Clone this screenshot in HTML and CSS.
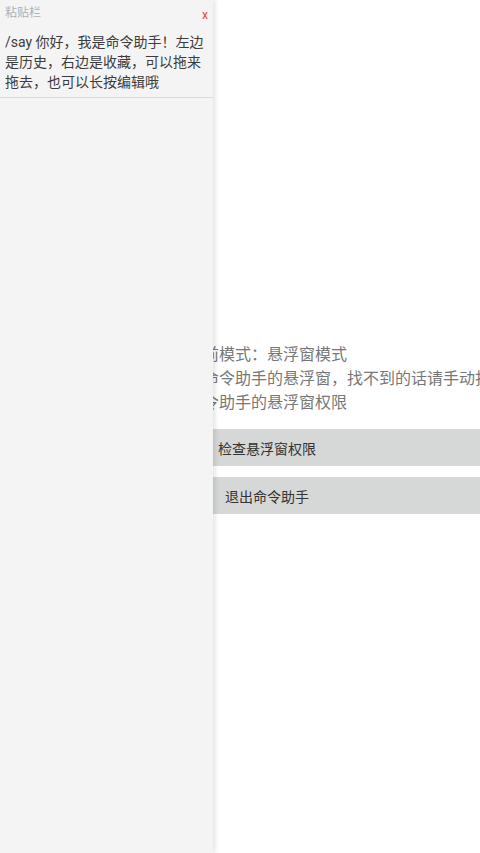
FILE: index.html
```html
<!DOCTYPE html>
<html lang="zh-CN">
<head>
    <meta charset="UTF-8">
    <meta name="viewport" content="width=device-width, initial-scale=1.0">
    <title>命令助手</title>
    <link rel="stylesheet" href="styles.css">
</head>
<body>

    <!-- 主界面 -->
    <div class="main">
        <div class="info">
            <p>当前模式：悬浮窗模式</p>
            <p>请在屏幕边缘或通知栏找到命令助手的悬浮窗，找不到的话请手动打开。</p>
            <p>命令助手的悬浮窗权限</p>
        </div>
        <button class="btn">检查悬浮窗权限</button>
        <button class="btn">退出命令助手</button>
    </div>

    <!-- 粘贴栏 (覆盖在主界面上) -->
    <div class="paste-bar">
        <div class="paste-header">
            <span class="paste-title">粘贴栏</span>
            <span class="paste-close">x</span>
        </div>
        <div class="paste-item">/say 你好，我是命令助手！左边是历史，右边是收藏，可以拖来拖去，也可以长按编辑哦</div>
    </div>

</body>
</html>
```

FILE: styles.css
```css
body {
    margin: 0;
    padding: 0;
    background-color: #fff;
    font-family: Roboto, "Noto Sans CJK SC", sans-serif;
    overflow: hidden;
}

.main {
    height: 853px;
    padding-left: 54px;
    display: flex;
    flex-direction: column;
    align-items: center;
    justify-content: center;
    box-sizing: border-box;
}

.info {
    display: flex;
    flex-direction: column;
    align-items: center;
    margin-bottom: 14px;
    margin-top: 4px;
}

.info p {
    margin: 0;
    font-size: 16px;
    line-height: 24px;
    color: #777;
    white-space: nowrap;
}

.btn {
    width: 100%;
    height: 37px;
    margin-bottom: 11px;
    border: none;
    background-color: #d6d7d7;
    color: #333;
    font-family: inherit;
    font-size: 14px;
    padding: 0;
}

.btn:last-child {
    margin-bottom: 0;
}

/* Paste bar */
.paste-bar {
    position: absolute;
    top: 0;
    left: 0;
    width: 213px;
    height: 853px;
    background-color: #f4f4f4;
    box-shadow: 2px 0 5px rgba(0, 0, 0, 0.12);
}

.paste-header {
    display: flex;
    justify-content: space-between;
    padding: 4px 5px 4px 5px;
    line-height: 18px;
    font-size: 12px;
}

.paste-title {
    color: #b0b0b0;
}

.paste-close {
    color: #f03c3c;
    padding-top: 2px;
}

.paste-item {
    padding: 4px 5px 5px 5px;
    font-size: 14px;
    line-height: 20px;
    color: #3c3c3c;
    border-bottom: 1px solid #dcdcdc;
}
```
